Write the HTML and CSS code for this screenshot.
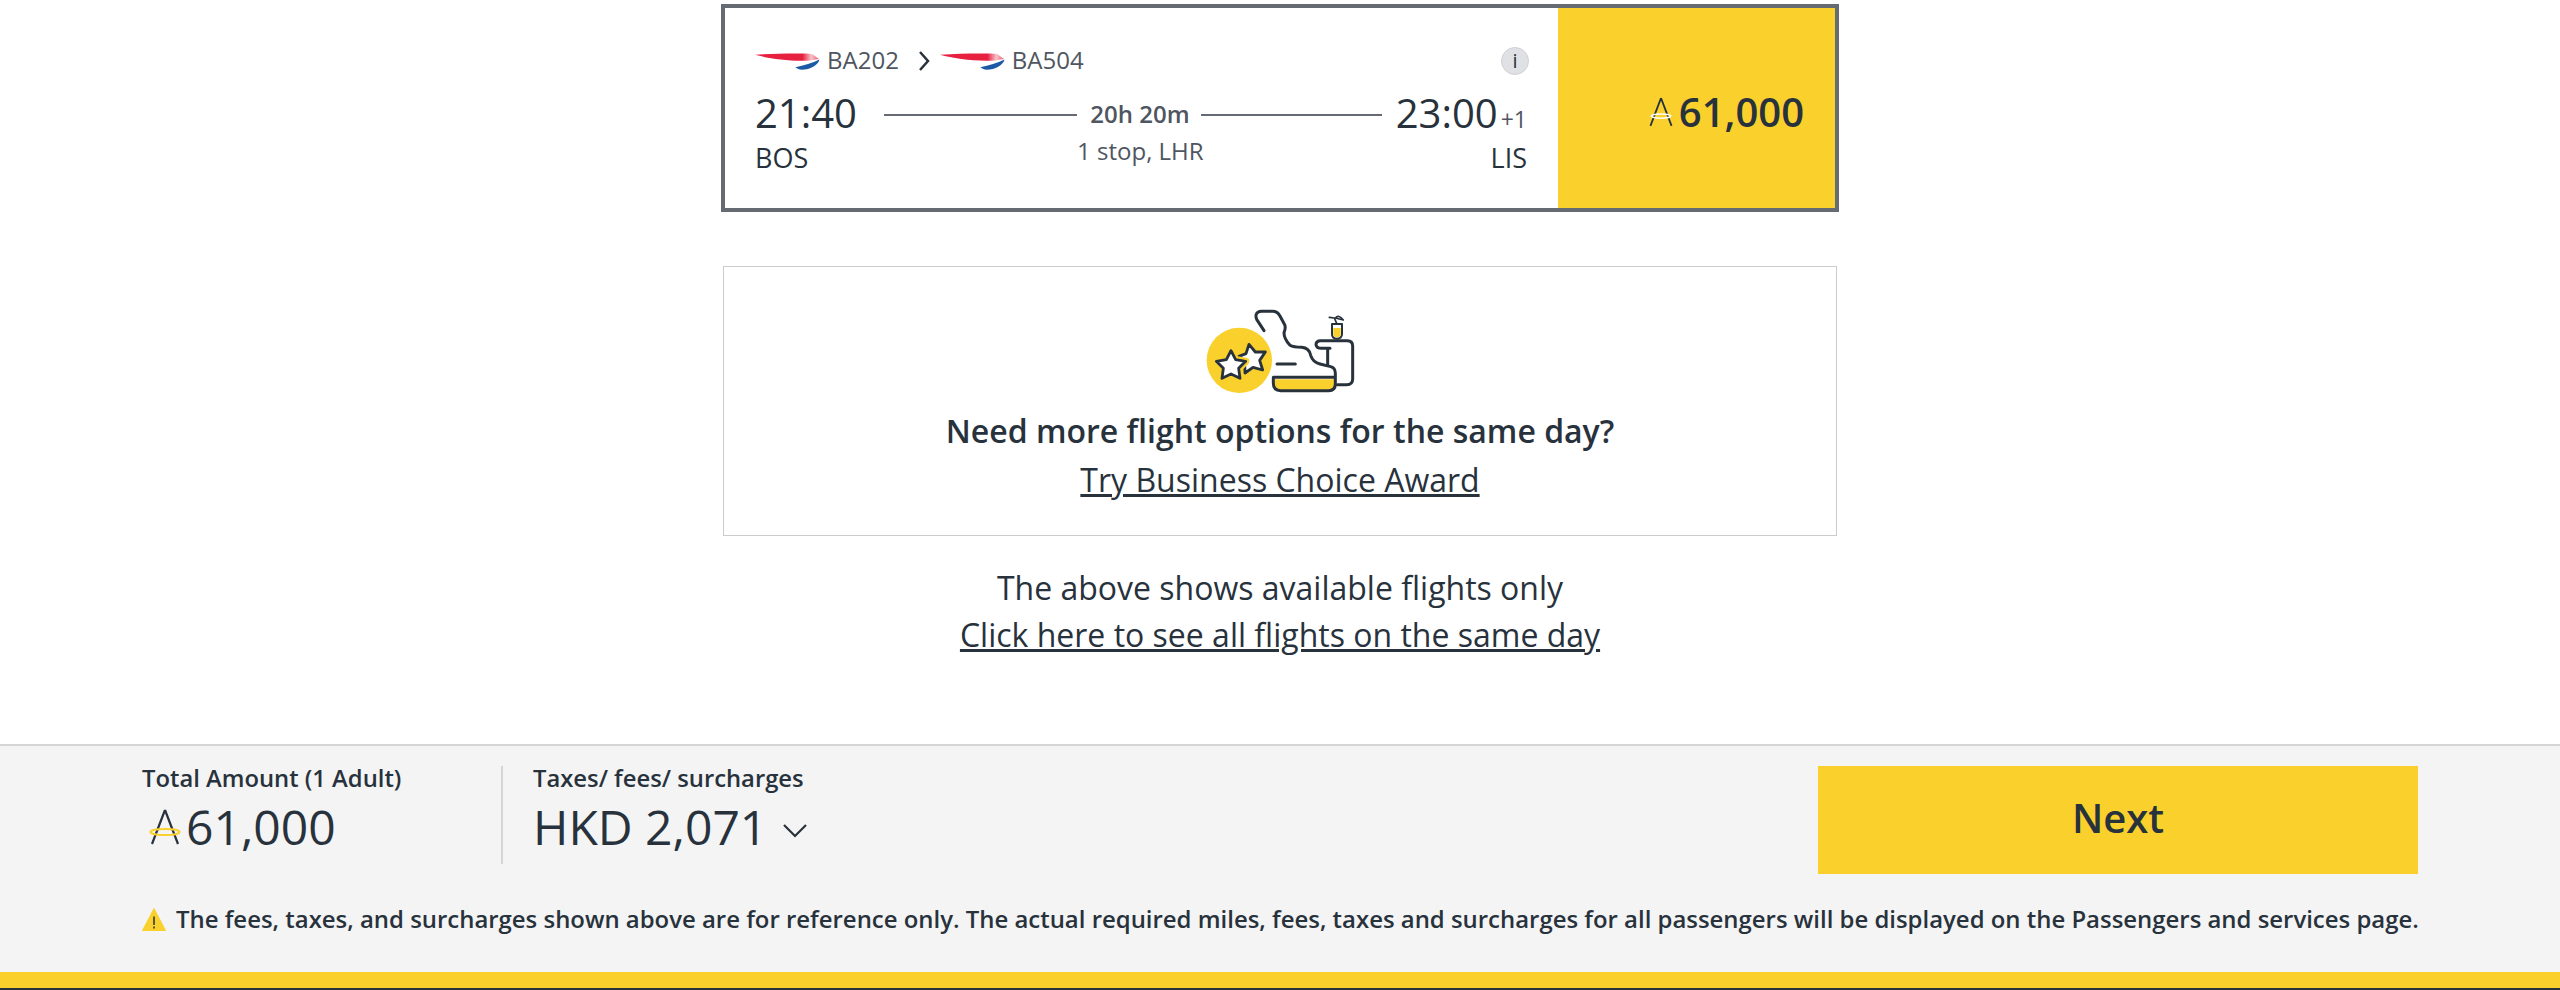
FILE: index.html
```html
<!DOCTYPE html>
<html lang="en">
  <head>
    <meta charset="UTF-8" />
    <title>Select flights</title>
    <link rel="stylesheet" href="styles.css">
  </head>
  <body>
    <svg class="defs" width="0" height="0">
      <defs>
        <linearGradient id="ba-red" x1="0" x2="1" y1="0" y2="0">
          <stop offset="0" stop-color="#e8203f" />
          <stop offset="0.74" stop-color="#e8203f" />
          <stop offset="0.88" stop-color="#f7c3cb" />
          <stop offset="1" stop-color="#e8606f" />
        </linearGradient>
        <symbol id="ba-logo" viewBox="0 0 66 20">
          <path d="M0 1.6C18 .4 38 0 51 .4L58 .8 65 6 56 7.400C36 8.600 14 5.400 0 1.600Z" fill="url(#ba-red)" />
          <path d="M41 14.400C50 12.600 58 10 65.500 6.500 64 12.500 56 16.800 47.500 16.800 45 16.800 43 15.800 41 14.400Z" fill="#1c5aa6" />
        </symbol>
        <symbol id="miles" viewBox="0 0 32 38">
          <path d="M16 2 3 36M16 2l13 34" fill="none" stroke="#28323c" stroke-width="2.200" />
        </symbol>
      </defs>
    </svg>

    <div class="wrap">
      <div class="flight-card">
        <div class="flight-info">
          <div class="flight-top">
            <svg class="ba-logo"><use href="#ba-logo" /></svg>
            <span class="flight-no">BA202</span>
            <svg class="flight-chevron" viewBox="0 0 12 22"><path d="M2 2l8 9-8 9" fill="none" stroke="#28323c" stroke-width="2.500" /></svg>
            <svg class="ba-logo"><use href="#ba-logo" /></svg>
            <span class="flight-no">BA504</span>
            <span class="info-icon">i</span>
          </div>
          <div class="flight-times">
            <div class="stop-col">
              <div class="time">21:40</div>
              <div class="airport">BOS</div>
            </div>
            <div class="middle-col">
              <div class="duration">
                <span class="line line--left"></span>
                <span class="duration__text">20h 20m</span>
                <span class="line line--right"></span>
              </div>
              <div class="stops">1 stop, LHR</div>
            </div>
            <div class="stop-col stop-col--right">
              <div class="time">23:00<span class="plus-day">+1</span></div>
              <div class="airport">LIS</div>
            </div>
          </div>
        </div>
        <div class="flight-price">
          <svg class="miles-icon miles-icon--card" viewBox="0 0 32 38">
            <use href="#miles" />
            <ellipse cx="16" cy="24" rx="12" ry="2.600" fill="none" stroke="#fff" stroke-width="1.800" />
          </svg>
          <span>61,000</span>
        </div>
      </div>

      <div class="promo">
        <svg class="promo__icon" viewBox="0 0 780 360">
          <circle cx="268" cy="211" r="98" fill="#fad02c" />
          <g fill="#fff" stroke="#28323c" stroke-width="8.500" stroke-linejoin="round" stroke-linecap="round">
            <path d="M297 163 316 186 346 186 329 211 338 240 309 232 285 249 284 219 259 202 288 191Z" />
            <path d="M243 182 257 209 287 214 266 235 270 265 243 252 216 265 220 235 199 214 229 209Z" stroke="#fad02c" stroke-width="22" />
            <path d="M243 182 257 209 287 214 266 235 270 265 243 252 216 265 220 235 199 214 229 209Z" />
          </g>
          <path d="M374 268H556V282Q556 302 536 302H392Q374 302 372 284Z" fill="#fad02c" />
          <g fill="none" stroke="#28323c" stroke-width="9" stroke-linecap="round" stroke-linejoin="round">
            <path d="M381 222H436" />
            <path d="M342 122 320 88Q312 66 334 64H368Q382 64 390 78L404 104Q408 114 402 128 402 146 420 166 430 172 455 172 478 174 482 196 488 216 510 222L542 230Q556 234 556 250V282Q556 302 536 302H392Q370 302 370 280V262H556" />
            <path d="M562 284H590Q608 284 608 266V168Q608 152 592 152H512Q498 152 498 164 500 175 514 175H540M533 175V224" />
            <path d="M546 102V132Q546 146 560 146 576 146 576 132V102Z" stroke-width="6" />
            <path d="M560 100 553 84 538 82" stroke-width="5" />
            <path d="M556 84Q566 72 580 90Z" stroke-width="5" />
          </g>
          <path d="M550 114H572V132Q572 142 560 142 550 142 550 132Z" fill="#fad02c" />
        </svg>
        <div class="promo__title">Need more flight options for the same day?</div>
        <a class="promo__link" href="#">Try Business Choice Award</a>
      </div>

      <div class="more-flights">
        <div>The above shows available flights only</div>
        <a href="#">Click here to see all flights on the same day</a>
      </div>
    </div>

    <footer class="summary">
      <div class="summary__row">
        <div class="summary__total">
          <div class="summary__label">Total Amount (1 Adult)</div>
          <div class="summary__value">
            <svg class="miles-icon miles-icon--total" viewBox="0 0 32 38">
              <use href="#miles" />
              <ellipse cx="16" cy="24" rx="14.500" ry="3" fill="none" stroke="#fad02c" stroke-width="2" />
            </svg>
            <span>61,000</span>
          </div>
        </div>
        <div class="summary__taxes">
          <div class="summary__label">Taxes/ fees/ surcharges</div>
          <div class="summary__value">
            <span>HKD 2,071</span>
            <svg class="summary__chevron" viewBox="0 0 24 14"><path d="M1 1l11 11L23 1" fill="none" stroke="#28323c" stroke-width="2.200" /></svg>
          </div>
        </div>
        <a class="next-btn" href="#">Next</a>
      </div>
      <div class="summary__note">
        <svg class="warn-icon" viewBox="0 0 24 25">
          <path d="M12 1.500 23.500 23.500H.5Z" fill="#fad02c" stroke="#fad02c" stroke-width="1" stroke-linejoin="round" />
          <path d="M12 9.500V18M12 19.500V21.500" stroke="#28323c" stroke-width="1.500" />
        </svg>
        <span>The fees, taxes, and surcharges shown above are for reference only. The actual required miles, fees, taxes and surcharges for all passengers will be displayed on the Passengers and services page.</span>
      </div>
    </footer>
  </body>
</html>
```

FILE: styles.css
```css
* {
  margin: 0;
  padding: 0;
  box-sizing: border-box;
}

html,
body {
  height: 990px;
  overflow: hidden;
}

body {
  font-family: "Open Sans", "Liberation Sans", sans-serif;
  color: #28323c;
  background: #fff;
}

a {
  color: #28323c;
}

.defs {
  position: absolute;
}

.wrap {
  width: 1118px;
  height: 744px;
  margin: 0 auto;
  padding-top: 4px;
}

.flight-card {
  display: flex;
  height: 208px;
  border: 4px solid #666b73;
}

.flight-info {
  flex: 1;
  padding: 39px 31px 0 30px;
}

.flight-top {
  display: flex;
  align-items: center;
  height: 28px;
}

.ba-logo {
  width: 65px;
  height: 20px;
  margin-top: 4px;
}

.flight-no {
  margin-left: 7px;
  margin-top: -4px;
  font-size: 24px;
  color: #4f5661;
}

.flight-chevron {
  width: 12px;
  height: 22px;
  margin: 0 10px 0 19px;
}

.info-icon {
  width: 28px;
  height: 28px;
  margin-left: auto;
  margin-right: -2px;
  border: 1px solid #cfd1d4;
  border-radius: 50%;
  background: #dfe1e4;
  font-size: 20px;
  line-height: 25px;
  text-align: center;
}

.flight-times {
  display: flex;
  margin-top: 11px;
}

.stop-col--right {
  text-align: right;
}

.time {
  font-size: 40px;
  line-height: 54px;
}

.plus-day {
  margin-left: 3px;
  font-size: 23px;
  line-height: 1;
  color: #4f5661;
}

.airport {
  font-size: 27px;
  line-height: 34px;
  margin-top: 1px;
}

.middle-col {
  flex: 1;
  text-align: center;
}

.duration {
  display: flex;
  align-items: center;
  height: 54px;
  padding-left: 27px;
  font-size: 24px;
  font-weight: 600;
  color: #4f5661;
}

.line {
  height: 2px;
  margin-top: 3px;
  background: #666b73;
}

.line--left {
  width: 193px;
}

.line--right {
  width: 181px;
}

.duration__text {
  width: 124px;
  padding-left: 2px;
}

.stops {
  margin-top: -4px;
  padding-left: 46px;
  padding-right: 18px;
  font-size: 24px;
  line-height: 30px;
  color: #4f5661;
}

.flight-price {
  display: flex;
  align-items: center;
  justify-content: flex-end;
  width: 277px;
  padding-top: 7px;
  padding-right: 31px;
  background: #fad02c;
  font-size: 40px;
  font-weight: 600;
}

.miles-icon {
  display: block;
  flex: none;
}

.miles-icon--card {
  width: 26px;
  height: 32px;
  margin: 0 5px 0 0;
}

.promo {
  display: flex;
  flex-direction: column;
  align-items: center;
  width: 1114px;
  height: 270px;
  margin: 54px auto 0;
  border: 1px solid #ccc;
  text-align: center;
}

.promo__icon {
  flex: none;
  width: 260px;
  height: 120px;
  margin-top: 23px;
}

.promo__title {
  margin-top: -1px;
  font-size: 32px;
  font-weight: 600;
  line-height: 44px;
}

.promo__link {
  font-size: 32px;
  line-height: 44px;
  margin-top: 5px;
}

.more-flights {
  margin-top: 28px;
  font-size: 32px;
  line-height: 47px;
  text-align: center;
}

.summary {
  height: 246px;
  border-top: 2px solid #d5d5d5;
  border-bottom: 2px solid #28323c;
  background: #f4f4f4;
  box-shadow: inset 0 -16px 0 #fad02c;
  padding: 20px 142px 0;
}

.summary__row {
  display: flex;
  height: 108px;
}

.summary__total {
  width: 361px;
  height: 98px;
  border-right: 2px solid #d5d5d5;
}

.summary__taxes {
  padding-left: 30px;
}

.summary__label {
  font-size: 23.8px;
  font-weight: 600;
  line-height: 26px;
  margin-top: -1px;
}

.summary__value {
  display: flex;
  align-items: center;
  margin-top: 3px;
  font-size: 48px;
  line-height: 66px;
}

.miles-icon--total {
  width: 32px;
  height: 38px;
  margin: 0 5px 0 7px;
}

.summary__chevron {
  width: 24px;
  height: 14px;
  margin: 8px 0 0 16px;
}

.next-btn {
  display: flex;
  align-items: center;
  justify-content: center;
  width: 600px;
  height: 108px;
  margin-left: auto;
  padding-bottom: 5px;
  background: #fad02c;
  font-size: 40px;
  font-weight: 600;
  text-decoration: none;
}

.summary__note {
  display: flex;
  align-items: center;
  gap: 10px;
  margin-top: 29px;
  font-size: 23.93px;
  font-weight: 600;
  line-height: 32px;
  white-space: nowrap;
}

.warn-icon {
  flex: none;
  width: 24px;
  height: 25px;
}
```
